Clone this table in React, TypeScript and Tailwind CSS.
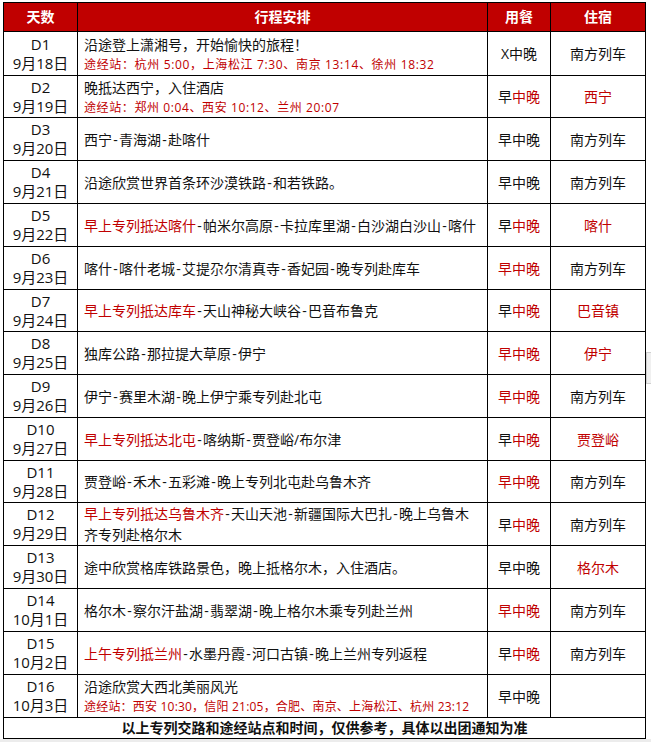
import type { ReactNode } from "react";

type Row = {
  day: string;
  date: string;
  h: string;
  red?: string;
  text?: string;
  wrap?: string;
  station?: string;
  track?: string;
  meal: string;
  blackUpTo: number;
  stay: string;
  stayRed?: boolean;
};

const rows: Row[] = [
  { day: "D1", date: "9月18日", h: "h-[44px]", text: "沿途登上潇湘号，开始愉快的旅程！", station: "途经站：杭州 5:00，上海松江 7:30、南京 13:14、徐州 18:32", track: "tracking-[0.65px]", meal: "X中晚", blackUpTo: 3, stay: "南方列车" },
  { day: "D2", date: "9月19日", h: "h-[42px]", text: "晚抵达西宁，入住酒店", station: "途经站：郑州 0:04、西安 10:12、兰州 20:07", track: "tracking-[0.6px]", meal: "早中晚", blackUpTo: 1, stay: "西宁", stayRed: true },
  { day: "D3", date: "9月20日", h: "h-[43px]", text: "西宁-青海湖-赴喀什", meal: "早中晚", blackUpTo: 3, stay: "南方列车" },
  { day: "D4", date: "9月21日", h: "h-[43px]", text: "沿途欣赏世界首条环沙漠铁路-和若铁路。", meal: "早中晚", blackUpTo: 3, stay: "南方列车" },
  { day: "D5", date: "9月22日", h: "h-[43px]", red: "早上专列抵达喀什", text: "-帕米尔高原-卡拉库里湖-白沙湖白沙山-喀什", meal: "早中晚", blackUpTo: 1, stay: "喀什", stayRed: true },
  { day: "D6", date: "9月23日", h: "h-[43px]", text: "喀什-喀什老城-艾提尕尔清真寺-香妃园-晚专列赴库车", meal: "早中晚", blackUpTo: 0, stay: "南方列车" },
  { day: "D7", date: "9月24日", h: "h-[42px]", red: "早上专列抵达库车", text: "-天山神秘大峡谷-巴音布鲁克", meal: "早中晚", blackUpTo: 1, stay: "巴音镇", stayRed: true },
  { day: "D8", date: "9月25日", h: "h-[43px]", text: "独库公路-那拉提大草原-伊宁", meal: "早中晚", blackUpTo: 0, stay: "伊宁", stayRed: true },
  { day: "D9", date: "9月26日", h: "h-[43px]", text: "伊宁-赛里木湖-晚上伊宁乘专列赴北屯", meal: "早中晚", blackUpTo: 0, stay: "南方列车" },
  { day: "D10", date: "9月27日", h: "h-[43px]", red: "早上专列抵达北屯", text: "-喀纳斯-贾登峪/布尔津", meal: "早中晚", blackUpTo: 1, stay: "贾登峪", stayRed: true },
  { day: "D11", date: "9月28日", h: "h-[42px]", text: "贾登峪-禾木-五彩滩-晚上专列北屯赴乌鲁木齐", meal: "早中晚", blackUpTo: 0, stay: "南方列车" },
  { day: "D12", date: "9月29日", h: "h-[43px]", red: "早上专列抵达乌鲁木齐", text: "-天山天池-新疆国际大巴扎-晚上乌鲁木", wrap: "齐专列赴格尔木", meal: "早中晚", blackUpTo: 1, stay: "南方列车" },
  { day: "D13", date: "9月30日", h: "h-[43px]", text: "途中欣赏格库铁路景色，晚上抵格尔木，入住酒店。", meal: "早中晚", blackUpTo: 3, stay: "格尔木", stayRed: true },
  { day: "D14", date: "10月1日", h: "h-[43px]", text: "格尔木-察尔汗盐湖-翡翠湖-晚上格尔木乘专列赴兰州", meal: "早中晚", blackUpTo: 0, stay: "南方列车" },
  { day: "D15", date: "10月2日", h: "h-[43px]", red: "上午专列抵兰州", text: "-水墨丹霞-河口古镇-晚上兰州专列返程", meal: "早中晚", blackUpTo: 1, stay: "南方列车" },
  { day: "D16", date: "10月3日", h: "h-[43px]", text: "沿途欣赏大西北美丽风光", station: "途经站：西安 10:30，信阳 21:05，合肥、南京、上海松江、杭州 23:12", track: "tracking-[0.2px]", meal: "早中晚", blackUpTo: 3, stay: "" },
];

// hyphens in the source font are wider than Noto's, pad them a little
function Dashed({ s }: { s: string }) {
  const parts = s.split("-");
  return (
    <>
      {parts.map((p, i) => (
        <span key={i}>
          {i > 0 && <span className="inline-block w-[7px] text-center">-</span>}
          {p}
        </span>
      ))}
    </>
  );
}

function Cell({ children, className = "" }: { children?: ReactNode; className?: string }) {
  return <div className={`border-r border-b border-black flex items-center ${className}`}>{children}</div>;
}

export default function App() {
  return (
    <div className="w-[651px] h-[742px] bg-white flex flex-col font-['Open_Sans','Noto_Sans_CJK_SC',sans-serif] text-[#111]">
      <div className="flex pt-[2px] pl-[3px]">
        <div className="grid grid-cols-[74px_410px_63px_95px] border-l border-t border-black">
          {/* header */}
          {["天数", "行程安排", "用餐", "住宿"].map((t) => (
            <Cell key={t} className="h-[29px] justify-center bg-[#c00000] text-white text-[14px] font-bold leading-none">
              {t}
            </Cell>
          ))}

          {rows.map((r) => (
            <div key={r.day} className="contents">
              <Cell className={`${r.h} flex-col justify-center text-[15px] leading-[19px]`}>
                <span>{r.day}</span>
                <span>{r.date}</span>
              </Cell>
              <Cell className={`${r.h} pl-[6px]`}>
                <div className="flex flex-col whitespace-nowrap">
                  <div className="text-[14px] leading-[21px]">
                    {r.red && <span className="text-[#c00000]">{r.red}</span>}
                    {r.text && <Dashed s={r.text} />}
                  </div>
                  {r.wrap && <div className="text-[14px] leading-[21px]">{r.wrap}</div>}
                  {r.station && (
                    <div className={`text-[12px] leading-[19px] text-[#c00000] ${r.track ?? ""}`}>{r.station}</div>
                  )}
                </div>
              </Cell>
              <Cell className={`${r.h} justify-center text-[14px]`}>
                <span>
                  {r.meal.slice(0, r.blackUpTo)}
                  <span className="text-[#c00000]">{r.meal.slice(r.blackUpTo)}</span>
                </span>
              </Cell>
              <Cell className={`${r.h} justify-center text-[14px] ${r.stayRed ? "text-[#c00000]" : ""}`}>
                {r.stay}
              </Cell>
            </div>
          ))}

          <div className="col-span-4 h-[21px] border-r border-b border-black flex items-center justify-center text-[14px] font-bold leading-none">
            以上专列交路和途经站点和时间，仅供参考，具体以出团通知为准
          </div>
        </div>
        <div className="flex flex-col pt-[350px]">
          <div className="w-[6px] h-[32px] bg-[#f0f0f0] border-l border-y border-[#d0d0d0]" />
        </div>
      </div>
      <div className="mt-auto h-[3px] bg-[#ececec]" />
    </div>
  );
}
